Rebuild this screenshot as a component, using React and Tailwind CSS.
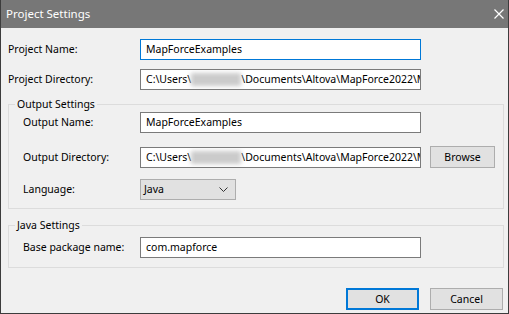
import { useState } from "react";

const Blur = () => (
  <span className="inline-block shrink-0 w-[50px] h-[13px] bg-[#cbcbcb] blur-[2px]" />
);

const PathText = () => (
  <span className="whitespace-nowrap flex items-center">
    <span className="shrink-0">C:\Users\</span>
    <Blur />
    <span className="shrink-0">\Documents\Altova\MapForce2022\M</span>
  </span>
);

const Field = ({ children, focused = false }) => (
  <div
    className={`w-[281px] h-[21px] shrink-0 bg-white border flex items-center pl-[5px] overflow-hidden ${
      focused ? "border-[#0078d7]" : "border-[#7a7a7a]"
    }`}
  >
    {children}
  </div>
);

const Button = ({ children, primary = false }) => (
  <button
    className={`w-[73px] h-[22px] bg-[#e1e1e1] flex items-center justify-center ${
      primary ? "border-2 border-[#0078d7]" : "border border-[#adadad]"
    }`}
  >
    {children}
  </button>
);

const Group = ({ title, className = "", children }) => (
  <fieldset className={`ml-[7px] w-[496px] border border-[#dcdcdc] ${className}`}>
    <legend className="ml-[6px] px-[2px] leading-[16px] h-[16px]">{title}</legend>
    <div className="pl-[14px]">{children}</div>
  </fieldset>
);

export default function App() {
  const [lang] = useState("Java");

  return (
    <div className="w-[509px] h-[314px] bg-[#f0f0f0] border-x border-b border-[#3c3c3c] flex flex-col font-['Noto_Sans',sans-serif] text-[10.5px] text-black leading-none">
      {/* title bar */}
      <div className="h-[28px] shrink-0 bg-[#777777] flex items-center justify-between pl-[5px] pr-[3px] text-white">
        <span className="text-[11.5px]">Project Settings</span>
        <svg width="10" height="10" viewBox="0 0 10 10" className="mr-[1px]">
          <path d="M0.5 0.5 L9.5 9.5 M9.5 0.5 L0.5 9.5" stroke="#fff" strokeWidth="1.2" />
        </svg>
      </div>

      <div className="flex items-center mt-[11px] pl-[7px]">
        <span className="w-[132px]">Project Name:</span>
        <Field focused>MapForceExamples</Field>
      </div>
      <div className="flex items-center mt-[9px] pl-[7px]">
        <span className="w-[132px]">Project Directory:</span>
        <Field>
          <PathText />
        </Field>
      </div>

      <Group title="Output Settings" className="mt-[6px] pb-[8px]">
        <div className="flex items-center">
          <span className="w-[117px]">Output Name:</span>
          <Field>MapForceExamples</Field>
        </div>
        <div className="flex items-center mt-[13px]">
          <span className="w-[117px]">Output Directory:</span>
          <Field>
            <PathText />
          </Field>
          <button className="ml-[9px] w-[65px] h-[22px] bg-[#e1e1e1] border border-[#adadad] flex items-center justify-center">
            Browse
          </button>
        </div>
        <div className="flex items-center mt-[11px]">
          <span className="w-[117px]">Language:</span>
          <div className="w-[96px] h-[21px] bg-[#e1e1e1] border border-[#adadad] flex items-center justify-between pl-[3px] pr-[7px]">
            <span>{lang}</span>
            <svg width="9" height="5" viewBox="0 0 9 5">
              <path d="M0.5 0.5 L4.5 4.5 L8.5 0.5" stroke="#333" fill="none" strokeWidth="1" />
            </svg>
          </div>
        </div>
      </Group>

      <Group title="Java Settings" className="mt-[8px] pb-[9px]">
        <div className="flex items-center mt-[4px]">
          <span className="w-[117px]">Base package name:</span>
          <Field>com.mapforce</Field>
        </div>
      </Group>

      <div className="flex justify-end gap-[11px] mt-[20px] pr-[5px]">
        <Button primary>OK</Button>
        <Button>Cancel</Button>
      </div>
    </div>
  );
}
